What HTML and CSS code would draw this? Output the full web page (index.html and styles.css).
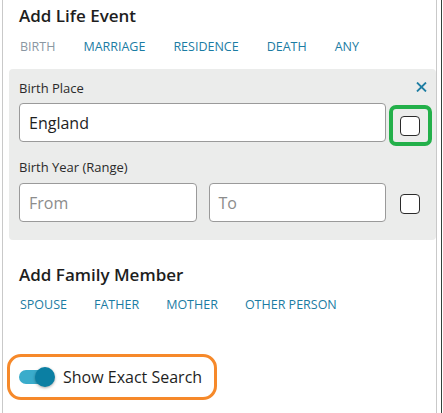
FILE: index.html
```html
<!DOCTYPE html>
<html>
<head>
<meta charset="utf-8">
<link rel="stylesheet" href="styles.css">
</head>
<body>
<div class="frame">
  <div class="panel">
    <h2 class="title">Add Life Event</h2>
    <div class="tabs events">
      <span class="tab muted">BIRTH</span>
      <span class="tab">MARRIAGE</span>
      <span class="tab">RESIDENCE</span>
      <span class="tab">DEATH</span>
      <span class="tab">ANY</span>
    </div>
    <div class="card">
      <svg class="close" width="11" height="10" viewBox="0 0 11 10"><path d="M1 0.5 L10 9.5 M10 0.5 L1 9.5" stroke="#1f7ea3" stroke-width="1.8" fill="none"/></svg>
      <div class="label">Birth Place</div>
      <div class="row">
        <div class="input wide"><span class="value">England</span></div>
        <div class="checkcell highlight"><span class="check"></span></div>
      </div>
      <div class="label second">Birth Year (Range)</div>
      <div class="row row2">
        <div class="input half"><span class="ph">From</span></div>
        <div class="input half"><span class="ph">To</span></div>
        <div class="checkcell"><span class="check"></span></div>
      </div>
    </div>
    <h2 class="title family">Add Family Member</h2>
    <div class="tabs">
      <span class="tab">SPOUSE</span>
      <span class="tab">FATHER</span>
      <span class="tab">MOTHER</span>
      <span class="tab">OTHER PERSON</span>
    </div>
    <div class="exact">
      <span class="toggle"><span class="knob"></span></span>
      <span class="exact-text">Show Exact Search</span>
    </div>
  </div>
  <div class="edge"></div>
</div>
</body>
</html>
```
FILE: styles.css
```css
html, body {
  margin: 0;
  padding: 0;
  background: #fff;
}
body {
  font-family: "Open Sans", "Noto Sans", sans-serif;
  color: #222;
}
.frame {
  display: flex;
  width: 443px;
  height: 413px;
  overflow: hidden;
}
.panel {
  margin-left: 2px;
  width: 433px;
  height: 413px;
  border-left: 1px solid #c9c9c9;
  border-right: 1px solid #c9c9c9;
}
.edge {
  margin-left: 4px;
  width: 1px;
  height: 413px;
  background: #34423a;
}
.title {
  margin: 4px 0 0 16px;
  font-size: 17px;
  line-height: 23px;
  font-weight: 600;
  color: #1e1e1e;
}
.tabs {
  display: flex;
  gap: 27px;
  margin: 11px 0 0 17px;
  font-size: 12.5px;
  line-height: 18px;
}
.tabs.events {
  gap: 28px;
}
.tab {
  color: #1b7ca3;
}
.tab.muted {
  color: #8a97a2;
}
.card {
  position: relative;
  margin: 13px 0 0 6px;
  width: 427px;
  box-sizing: border-box;
  padding: 11px 4px 16px 10px;
  background: #ebeceb;
  border-radius: 4px;
}
.close {
  position: absolute;
  top: 13px;
  right: 9px;
}
.label {
  font-size: 13px;
  line-height: 17px;
  color: #2a2a2a;
}
.label.second {
  margin-top: 13px;
}
.row {
  display: flex;
  align-items: flex-start;
  margin-top: 6px;
}
.row2 {
  margin-top: 7px;
  gap: 12px;
}
.input {
  box-sizing: border-box;
  height: 39px;
  background: #fff;
  border: 1px solid #9a9a9a;
  border-radius: 4px;
  padding-left: 9px;
  display: flex;
  align-items: center;
  font-size: 16px;
}
.input.wide {
  width: 367px;
}
.input.half {
  width: 178px;
}
.value {
  color: #1e1e1e;
}
.ph {
  color: #8c8c8c;
}
.checkcell {
  box-sizing: border-box;
  width: 43px;
  height: 41px;
  margin-left: 3px;
  margin-top: 2px;
  border: 4px solid transparent;
  border-radius: 7px;
  display: flex;
  align-items: center;
  justify-content: center;
  padding-right: 2px;
}
.row2 .checkcell {
  margin-left: -9px;
  margin-top: 0;
}
.checkcell.highlight {
  border-color: #23b04a;
}
.check {
  box-sizing: border-box;
  width: 20px;
  height: 20px;
  border: 1.5px solid #2b2b2b;
  border-radius: 4px;
  background: #fff;
}
.title.family {
  margin-top: 23px;
}
.family + .tabs {
  margin-top: 10px;
}
.exact {
  margin: 40px 0 0 4px;
  box-sizing: border-box;
  width: 210px;
  height: 46px;
  border: 3px solid #f6892a;
  border-radius: 14px;
  display: flex;
  align-items: center;
  padding-left: 9px;
}
.toggle {
  position: relative;
  width: 33px;
  height: 14px;
  border-radius: 7px;
  background: #3aaccb;
}
.knob {
  position: absolute;
  left: 16px;
  top: -3px;
  width: 20px;
  height: 20px;
  border-radius: 50%;
  background: #0b7fa3;
  box-shadow: 0 1px 3px rgba(0,0,0,0.35);
}
.exact-text {
  margin-left: 11px;
  font-size: 16px;
  color: #1e1e1e;
}
```
